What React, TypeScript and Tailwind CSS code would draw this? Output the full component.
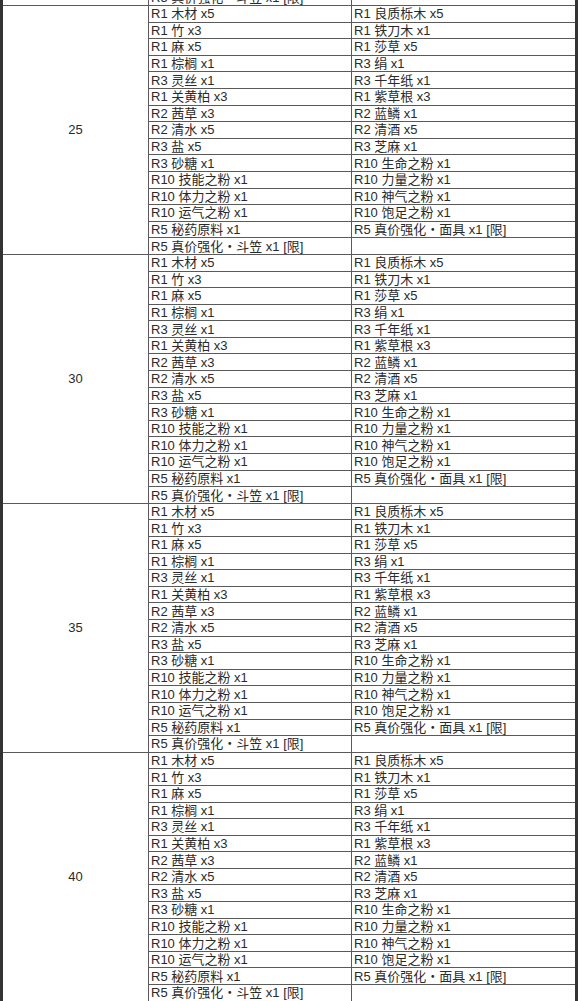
const pairs: [string, string][] = [
  ['R1 木材 x5', 'R1 良质栎木 x5'],
  ['R1 竹 x3', 'R1 铁刀木 x1'],
  ['R1 麻 x5', 'R1 莎草 x5'],
  ['R1 棕榈 x1', 'R3 绢 x1'],
  ['R3 灵丝 x1', 'R3 千年纸 x1'],
  ['R1 关黄柏 x3', 'R1 紫草根 x3'],
  ['R2 茜草 x3', 'R2 蓝鳞 x1'],
  ['R2 清水 x5', 'R2 清酒 x5'],
  ['R3 盐 x5', 'R3 芝麻 x1'],
  ['R3 砂糖 x1', 'R10 生命之粉 x1'],
  ['R10 技能之粉 x1', 'R10 力量之粉 x1'],
  ['R10 体力之粉 x1', 'R10 神气之粉 x1'],
  ['R10 运气之粉 x1', 'R10 饱足之粉 x1'],
  ['R5 秘药原料 x1', 'R5 真价强化・面具 x1 [限]'],
  ['R5 真价强化・斗笠 x1 [限]', ''],
];

const levels = [25, 30, 35, 40];

const cell = 'border border-[#5a5a5a] px-[2px] whitespace-nowrap overflow-hidden leading-none';

export default function App() {
  return (
    <div
      className="h-screen overflow-hidden bg-white text-[13px] text-[#2a2a2a]"
      style={{ fontFamily: '"Liberation Sans", "Noto Sans CJK SC", sans-serif' }}
    >
      <table className="mt-[-11.6px] w-full table-fixed border-collapse border-l-[3px] border-r-[3px] border-l-[#333] border-r-[#333]">
        <colgroup>
          <col className="w-[147px]" />
          <col className="w-[203px]" />
          <col />
        </colgroup>
        <tbody>
          <tr className="h-[16.6px]">
            <td className={cell}></td>
            <td className={cell}>{pairs[14][0]}</td>
            <td className={cell}></td>
          </tr>
          {levels.map((lv) =>
            pairs.map(([a, b], i) => (
              <tr key={`${lv}-${i}`} className="h-[16.6px]">
                {i === 0 && (
                  <td rowSpan={15} className="border border-[#5a5a5a] text-center align-middle">
                    {lv}
                  </td>
                )}
                <td className={cell}>{a}</td>
                <td className={cell}>{b}</td>
              </tr>
            ))
          )}
        </tbody>
      </table>
    </div>
  );
}
